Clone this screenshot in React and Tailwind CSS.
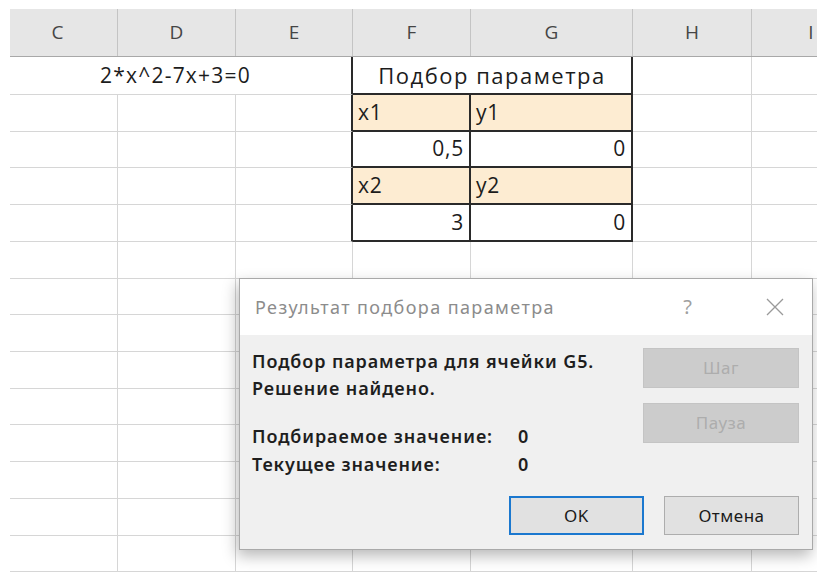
import React from "react";

const sheetFont = { fontFamily: '"Open Sans", "Noto Sans", sans-serif' };
const uiFont = { fontFamily: '"Noto Sans", "Open Sans", sans-serif' };

const cols = [
  { key: "C", w: "w-[108px]", label: "C", pad: "pr-[12px]" },
  { key: "D", w: "w-[118px]", label: "D" },
  { key: "E", w: "w-[117px]", label: "E" },
  { key: "F", w: "w-[118px]", label: "F" },
  { key: "G", w: "w-[162px]", label: "G" },
  { key: "H", w: "w-[119px]", label: "H" },
  { key: "I", w: "w-[118px]", label: "I" },
];

function Cell({ className = "", children }) {
  return (
    <div className={`shrink-0 border-r border-b border-[#d6d6d6] ${className}`}>
      {children}
    </div>
  );
}

function PlainRows({ count }) {
  return Array.from({ length: count }).map((_, i) => (
    <div key={i} className="flex h-[36.7px]">
      {cols.map((c) => (
        <Cell key={c.key} className={`${c.w} h-full`} />
      ))}
    </div>
  ));
}

// One row of the x/y table in F:G, flanked by empty C, D, E, H, I cells
function TableRow({ h, left, right, tint, numeric }) {
  const bg = tint ? "bg-[#fdecd2]" : "bg-white";
  const align = numeric ? "justify-end pr-[5px]" : "justify-start pl-[5px]";
  const text = "text-[21px] tracking-[0.8px] text-[#1c1c1c]";
  return (
    <div className={`flex ${h}`}>
      <Cell className="w-[108px] h-full" />
      <Cell className="w-[118px] h-full" />
      <div className="w-[117px] h-full shrink-0 border-b border-[#d6d6d6] border-r-2 border-r-[#2a2a2a]" />
      <div className={`w-[118px] h-full shrink-0 flex items-center ${align} ${bg} border-r-2 border-b-2 border-[#2a2a2a] ${text}`}>
        {left}
      </div>
      <div className={`w-[162px] h-full shrink-0 flex items-center ${align} ${bg} border-r-2 border-b-2 border-[#2a2a2a] ${text}`}>
        {right}
      </div>
      <Cell className="w-[119px] h-full" />
      <Cell className="w-[118px] h-full" />
    </div>
  );
}

function Sheet() {
  return (
    <div className="pt-[9px] pl-[10px]" style={sheetFont}>
      {/* column headers */}
      <div className="flex h-[48px] bg-[#e6e6e6] border-b border-[#a8a8a8]">
        {cols.map((c, i) => (
          <div
            key={c.key}
            className={`${c.w} ${c.pad || ""} shrink-0 h-full flex items-center justify-center text-[19px] text-[#454545] ${
              i < cols.length - 1 ? "border-r border-[#c4c4c4]" : ""
            }`}
          >
            {c.label}
          </div>
        ))}
      </div>

      {/* row 1: equation and table caption */}
      <div className="flex h-[38px]">
        <div className="w-[343px] h-full shrink-0 flex items-center justify-center pr-[10px] border-b border-[#d6d6d6] border-r-2 border-r-[#2a2a2a] text-[21px] tracking-[1.2px] text-[#1c1c1c]">
          2*x^2-7x+3=0
        </div>
        <div className="w-[280px] h-full shrink-0 flex items-center justify-center border-r-2 border-b-2 border-[#2a2a2a] text-[22px] tracking-[1.5px] text-[#1c1c1c]">
          Подбор параметра
        </div>
        <Cell className="w-[119px] h-full" />
        <Cell className="w-[118px] h-full" />
      </div>

      <TableRow h="h-[37px]" left="x1" right="y1" tint />
      <TableRow h="h-[36px]" left="0,5" right="0" numeric />
      <TableRow h="h-[37px]" left="x2" right="y2" tint />
      <TableRow h="h-[37px]" left="3" right="0" numeric />

      <PlainRows count={9} />
    </div>
  );
}

function Dialog() {
  return (
    <div
      className="absolute left-[239px] top-[278px] w-[574px] h-[272px] border border-[#a9a9a9] bg-[#f0f0f0] shadow-[-2px_6px_14px_rgba(0,0,0,0.28)] flex flex-col"
      style={uiFont}
    >
      {/* title bar */}
      <div className="h-[56px] bg-white flex items-center pl-[15px] pr-[28px] shrink-0">
        <span className="text-[18px] tracking-[1.4px] text-[#8c8c8c] flex-1">Результат подбора параметра</span>
        <span className="text-[20px] text-[#a0a0a0] mr-[74px]">?</span>
        <svg width="18" height="18" viewBox="0 0 18 18" className="text-[#9a9a9a]">
          <path d="M1 1L17 17M17 1L1 17" stroke="currentColor" strokeWidth="1.3" fill="none" />
        </svg>
      </div>

      {/* body */}
      <div className="flex-1 flex pl-[12px] pr-[13px] pt-[13px] pb-[14px]">
        <div className="flex-1 flex flex-col text-[18px] tracking-[0.9px] font-semibold text-[#1e1e1e]">
          <div className="leading-[27px]">Подбор параметра для ячейки G5.</div>
          <div className="leading-[27px]">Решение найдено.</div>
          <div className="mt-[20px] flex leading-[28px]">
            <span className="w-[266px]">Подбираемое значение:</span>
            <span>0</span>
          </div>
          <div className="flex leading-[28px]">
            <span className="w-[266px]">Текущее значение:</span>
            <span>0</span>
          </div>
        </div>
      </div>

      {/* buttons */}
      <div className="absolute right-[13px] top-[69px] flex flex-col gap-[15px]">
        <div className="w-[156px] h-[40px] bg-[#cccccc] border border-[#c4c4c4] flex items-center justify-center text-[17px] tracking-[0.5px] text-[#adadad]">
          Шаг
        </div>
        <div className="w-[156px] h-[40px] bg-[#cccccc] border border-[#c4c4c4] flex items-center justify-center text-[17px] tracking-[0.5px] text-[#adadad]">
          Пауза
        </div>
      </div>
      <div className="absolute right-[13px] top-[217px] flex gap-[20px]">
        <div className="w-[135px] h-[39px] bg-[#e1e1e1] border-2 border-[#1b78cf] flex items-center justify-center text-[17px] tracking-[0.5px] text-[#1a1a1a]">
          OK
        </div>
        <div className="w-[135px] h-[39px] bg-[#e1e1e1] border border-[#adadad] flex items-center justify-center text-[17px] tracking-[0.5px] text-[#1a1a1a]">
          Отмена
        </div>
      </div>
    </div>
  );
}

export default function App() {
  return (
    <div className="relative w-[817px] h-[573px] overflow-hidden bg-white">
      <Sheet />
      <Dialog />
    </div>
  );
}
